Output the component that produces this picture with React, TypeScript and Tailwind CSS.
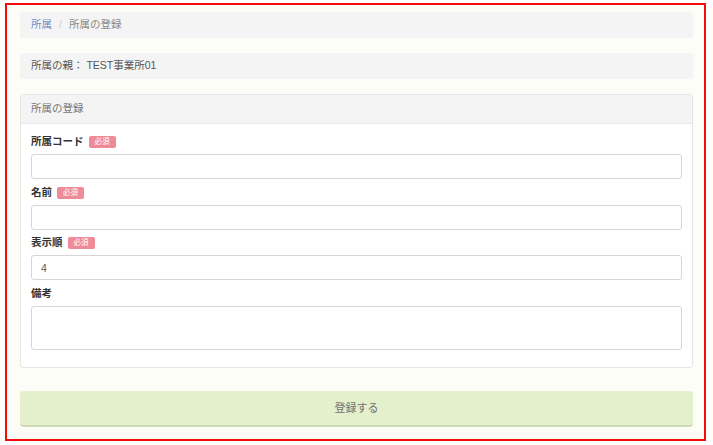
import React from 'react';

const font = { fontFamily: '"Liberation Sans", "Noto Sans CJK JP", sans-serif' };

function Required() {
  return (
    <span className="ml-[5px] inline-flex h-[12px] w-[27px] items-center justify-center rounded-[2px] bg-[#ef8a98] text-[7.5px] font-normal leading-none text-white">
      必須
    </span>
  );
}

function Field({ label, required, value, tall }: { label: string; required?: boolean; value?: string; tall?: boolean }) {
  return (
    <div className="mb-[6.5px]">
      <div className="mb-[5px] flex h-[14px] items-center text-[10.5px] font-bold text-[#333]">
        {label}
        {required && <Required />}
      </div>
      {tall ? (
        <textarea className="block h-[44px] w-full resize-none rounded-[3px] border border-[#d6d6d6] bg-white px-[9px] py-[5px] text-[10.5px] text-[#555] outline-none" />
      ) : (
        <input
          defaultValue={value}
          className="block h-[25px] w-full rounded-[3px] border border-[#d6d6d6] bg-white px-[9px] text-[10.5px] text-[#555] outline-none"
        />
      )}
    </div>
  );
}

export default function App() {
  return (
    <div className="h-[445px] w-[713px] bg-white pl-[5px] pt-[3px]" style={font}>
      <div className="h-[438px] w-[701px] border-2 border-[#f20c0c] bg-[#fbfdf6] pl-[13px] pr-[11px] pt-[7px]">
        {/* breadcrumb */}
        <div className="flex h-[26px] items-center rounded-[3px] bg-[#f4f4f4] px-[11px] text-[10.5px]">
          <span className="text-[#6a8fc6]">所属</span>
          <span className="px-[7px] text-[#cccccc]">/</span>
          <span className="text-[#888]">所属の登録</span>
        </div>

        {/* parent */}
        <div className="mt-[15px] flex h-[26px] items-center rounded-[3px] bg-[#f4f4f4] px-[11px] text-[10.5px] text-[#555]">
          所属の親： TEST事業所01
        </div>

        {/* card */}
        <div className="mt-[15px] rounded-[3px] border border-[#e6e6e6] bg-white">
          <div className="flex h-[29px] items-center border-b border-[#e8e8e8] bg-[#f4f4f4] px-[10px] text-[10.5px] text-[#777]">
            所属の登録
          </div>
          <div className="px-[10px] pt-[11px] pb-[11px]">
            <Field label="所属コード" required />
            <Field label="名前" required />
            <Field label="表示順" required value="4" />
            <Field label="備考" tall />
          </div>
        </div>

        <button className="mt-[23px] flex h-[36px] w-full items-center justify-center rounded-[4px] border-b-2 border-[#cfdab5] bg-[#e4f0cb] text-[11px] text-[#707070]">
          登録する
        </button>
      </div>
    </div>
  );
}
